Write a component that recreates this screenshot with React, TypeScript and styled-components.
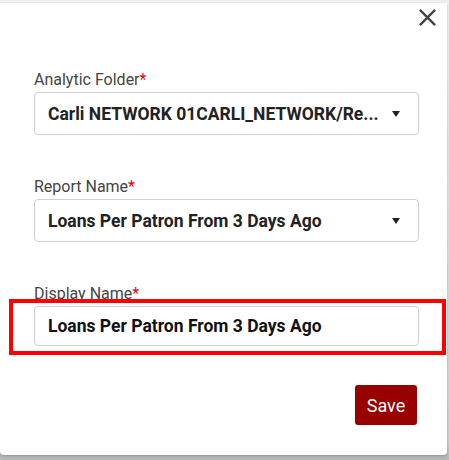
import React from "react";
import styled, { createGlobalStyle } from "styled-components";

const Global = createGlobalStyle`
  html, body { margin: 0; padding: 0; }
  body {
    width: 449px;
    height: 460px;
    overflow: hidden;
    font-family: Roboto, "Liberation Sans", Arial, sans-serif;
    background: linear-gradient(to bottom, #ececec 0px, #f4f4f4 3px, #d0d3d5 440px, #b4b8ba 460px);
  }
`;

const Dialog = styled.div`
  box-sizing: border-box;
  margin-top: 3px;
  width: 447px;
  height: 452px;
  background: #fff;
  border-radius: 0 0 4px 4px;
  box-shadow: 0 1px 3px rgba(0, 0, 0, 0.25);
  display: flex;
  flex-direction: column;
`;

const Header = styled.div`
  height: 30px;
  display: flex;
  justify-content: flex-end;
  align-items: flex-start;
  padding-right: 5px;
`;

const CloseButton = styled.button`
  border: none;
  background: none;
  padding: 0;
  margin: 0;
  width: 29px;
  height: 29px;
  display: flex;
  cursor: pointer;
  color: #444;
`;

const Form = styled.div`
  padding: 37px 28px 0 34px;
  display: flex;
  flex-direction: column;
`;

const Field = styled.div<{ $gap?: number }>`
  position: relative;
  display: flex;
  flex-direction: column;
  margin-bottom: ${(p) => p.$gap ?? 42}px;
`;

const Label = styled.label`
  font-size: 16px;
  line-height: 19px;
  color: #444;
  font-weight: 400;
  margin-bottom: 3px;
`;

const Req = styled.span`
  color: #e00;
`;

const Select = styled.div`
  box-sizing: border-box;
  height: 43px;
  border: 1px solid #cfcfcf;
  border-radius: 4px;
  display: flex;
  align-items: center;
  padding: 0 18px 0 13px;
  background: #fff;
`;

const SelectText = styled.span`
  flex: 1;
  min-width: 0;
  font-size: 17.5px;
  font-weight: 700;
  color: #222;
  white-space: nowrap;
`;

const Caret = styled.span`
  width: 0;
  height: 0;
  border-left: 4px solid transparent;
  border-right: 4px solid transparent;
  border-top: 6px solid #222;
`;

const Input = styled.div`
  box-sizing: border-box;
  height: 40px;
  border: 1px solid #cfcfcf;
  border-radius: 4px;
  display: flex;
  align-items: center;
  padding: 0 13px;
  font-size: 17.5px;
  font-weight: 700;
  color: #111;
`;

const Highlight = styled.div`
  position: absolute;
  left: -25px;
  right: -27px;
  top: 15px;
  bottom: -9px;
  border: 4.5px solid #f00;
  pointer-events: none;
`;

const Footer = styled.div`
  display: flex;
  justify-content: flex-end;
  padding-right: 2px;
`;

const SaveButton = styled.button`
  box-sizing: border-box;
  height: 40px;
  width: 62px;
  border: none;
  border-radius: 3px;
  background: #990000;
  color: #fff;
  font-family: Roboto, "Liberation Sans", Arial, sans-serif;
  font-size: 18px;
  padding: 0;
  cursor: pointer;
`;

export default function App() {
  return (
    <>
      <Global />
      <Dialog>
        <Header>
          <CloseButton aria-label="Close">
            <svg width="29" height="29" viewBox="0 0 24 24" fill="currentColor">
              <path d="M19 6.41L17.59 5 12 10.59 6.41 5 5 6.41 10.59 12 5 17.59 6.41 19 12 13.41 17.59 19 19 17.59 13.41 12z" />
            </svg>
          </CloseButton>
        </Header>
        <Form>
          <Field>
            <Label>
              Analytic Folder<Req>*</Req>
            </Label>
            <Select>
              <SelectText>Carli NETWORK 01CARLI_NETWORK/Re...</SelectText>
              <Caret />
            </Select>
          </Field>
          <Field>
            <Label>
              Report Name<Req>*</Req>
            </Label>
            <Select>
              <SelectText>Loans Per Patron From 3 Days Ago</SelectText>
              <Caret />
            </Select>
          </Field>
          <Field $gap={39}>
            <Label>
              Display Name<Req>*</Req>
            </Label>
            <Input>Loans Per Patron From 3 Days Ago</Input>
            <Highlight />
          </Field>
          <Footer>
            <SaveButton>Save</SaveButton>
          </Footer>
        </Form>
      </Dialog>
    </>
  );
}
